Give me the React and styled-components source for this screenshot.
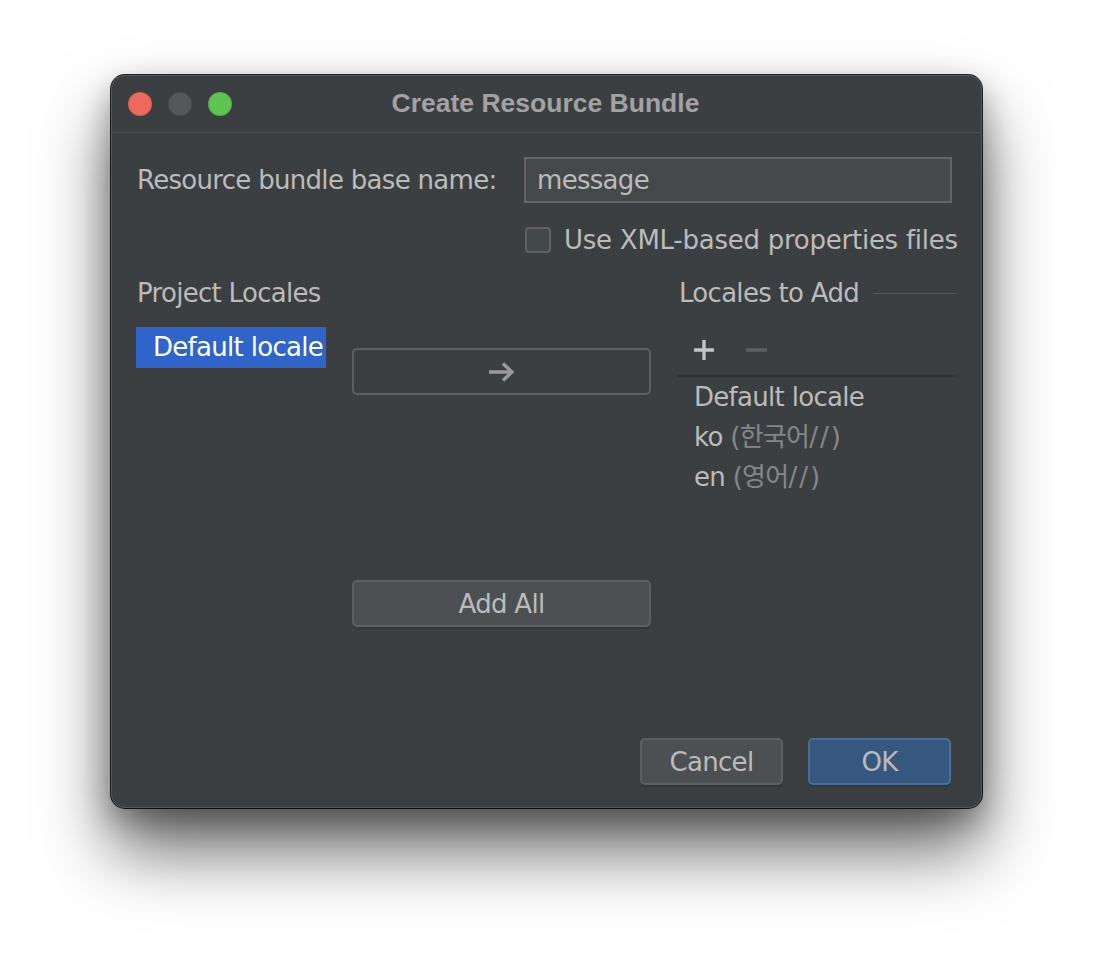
import React from "react";
import styled, { createGlobalStyle } from "styled-components";

const GlobalStyle = createGlobalStyle`
  html, body { margin: 0; padding: 0; background: #ffffff; }
  body { font-family: "DejaVu Sans", "Noto Sans CJK KR", sans-serif; }
`;

const Page = styled.div`
  width: 1094px;
  height: 956px;
  padding: 75px 0 0 111px;
  box-sizing: border-box;
`;

const Window = styled.div`
  width: 871px;
  height: 733px;
  background: #3c3f41;
  border-radius: 14px;
  box-shadow: inset 0 0 0 1px rgba(255, 255, 255, 0.13),
    0 0 0 1px rgba(0, 0, 0, 0.85), 0 42px 70px rgba(0, 0, 0, 0.6),
    0 12px 30px rgba(0, 0, 0, 0.3);
  display: flex;
  flex-direction: column;
  overflow: hidden;
`;

const TitleBar = styled.div`
  height: 57px;
  border-bottom: 1px solid #4c4f51;
  display: grid;
  grid-template-columns: 1fr auto 1fr;
  align-items: center;
  padding: 0 17px;
`;

const Lights = styled.div`
  display: flex;
  gap: 16px;
`;

const Light = styled.span`
  width: 24px;
  height: 24px;
  border-radius: 50%;
  background: ${(p) => p.$color};
  box-shadow: inset 0 0 0 1px rgba(0, 0, 0, 0.12);
`;

const Title = styled.div`
  font-family: "Liberation Sans", Arial, sans-serif;
  font-weight: 700;
  font-size: 26.5px;
  color: #a2a2a2;
  margin-left: -2px;
`;

const Content = styled.div`
  flex: 1;
  display: flex;
  flex-direction: column;
  padding: 24px 25px 23px 25px;
  font-size: 26px;
  letter-spacing: -0.7px;
  color: #bbbbbb;
`;

const FormGrid = styled.div`
  display: grid;
  grid-template-columns: 388px 1fr;
  grid-template-rows: 46px 26px;
  row-gap: 24px;
  align-items: center;
`;

const Label = styled.div`
  padding-left: 1px;
  line-height: 30px;
`;

const TextField = styled.div`
  height: 46px;
  margin-right: 6px;
  box-sizing: border-box;
  background: #45494a;
  border: 2px solid #646464;
  padding: 0 11px;
  display: flex;
  align-items: center;
`;

const CheckRow = styled.label`
  grid-column: 2;
  display: flex;
  align-items: center;
  gap: 13px;
  padding-left: 1px;
  letter-spacing: -0.25px;
  white-space: nowrap;
`;

const CheckBox = styled.span`
  width: 26px;
  height: 26px;
  flex: none;
  box-sizing: border-box;
  border: 2px solid #5f6163;
  background: #43494a;
  border-radius: 4px;
`;

const Main = styled.div`
  flex: 1;
  margin-top: 26px;
  display: grid;
  grid-template-columns: 190px 299px 279px;
  column-gap: 26px;
  align-items: start;
  & > :nth-child(3) { margin-left: 1px; }
`;

const Column = styled.div`
  display: flex;
  flex-direction: column;
`;

const Header = styled.div`
  height: 28px;
  line-height: 28px;
  padding-left: 1px;
  display: flex;
  align-items: center;
  gap: 15px;
  white-space: nowrap;
`;

const HeaderLine = styled.span`
  flex: 1;
  height: 1px;
  background: #56595b;
`;

const SelectedItem = styled.div`
  margin-top: 20px;
  height: 41px;
  line-height: 41px;
  padding-left: 17px;
  background: #2f65ca;
  color: #ffffff;
  white-space: nowrap;
`;

const Button = styled.button`
  font: inherit;
  letter-spacing: inherit;
  height: 47px;
  width: ${(p) => p.$width || "100%"};
  margin-top: ${(p) => p.$top || 0}px;
  box-sizing: border-box;
  border-radius: 5px;
  border: 2px solid ${(p) => (p.$primary ? "#4a6e92" : "#5e6060")};
  background: ${(p) =>
    p.$primary ? "#365880" : p.$ghost ? "transparent" : "#4c5052"};
  color: #bbbbbb;
  display: flex;
  align-items: center;
  justify-content: center;
  padding: 0;
  box-shadow: ${(p) => (p.$ghost ? "none" : "0 2px 0 rgba(0,0,0,0.12)")};
`;

const Toolbar = styled.div`
  margin-top: 25px;
  height: 36px;
  display: flex;
  align-items: center;
  gap: 31px;
  padding-left: 15px;
`;

const Separator = styled.div`
  margin-top: 7px;
  height: 2px;
  background: #2f3133;
`;

const LocaleRow = styled.div`
  height: 40px;
  line-height: 40px;
  padding-left: 16px;
  white-space: nowrap;
`;

const Muted = styled.span`
  color: #84878a;
`;

const Slashes = styled.span`
  letter-spacing: 2px;
`;

const Footer = styled.div`
  display: flex;
  justify-content: flex-end;
  gap: 25px;
  margin-right: 6px;
`;

const ArrowIcon = () => (
  <svg width="28" height="22" viewBox="0 0 28 22">
    <path
      d="M1 11 H24 M15 2.5 L24 11 L15 19.5"
      fill="none"
      stroke="#9a9a9a"
      strokeWidth="3.4"
    />
  </svg>
);

const PlusIcon = () => (
  <svg width="22" height="22" viewBox="0 0 22 22">
    <path d="M11 1 V21 M1 11 H21" stroke="#c4c4c4" strokeWidth="3.4" />
  </svg>
);

const MinusIcon = () => (
  <svg width="21" height="22" viewBox="0 0 21 22">
    <path d="M0 11 H21" stroke="#5e6062" strokeWidth="3.4" />
  </svg>
);

export default function App() {
  return (
    <Page>
      <GlobalStyle />
      <Window>
        <TitleBar>
          <Lights>
            <Light $color="#ee6a5f" />
            <Light $color="#55585a" />
            <Light $color="#5ec453" />
          </Lights>
          <Title>Create Resource Bundle</Title>
          <span />
        </TitleBar>
        <Content>
          <FormGrid>
            <Label>Resource bundle base name:</Label>
            <TextField>message</TextField>
            <CheckRow>
              <CheckBox />
              <span>Use XML-based properties files</span>
            </CheckRow>
          </FormGrid>
          <Main>
            <Column>
              <Header>Project Locales</Header>
              <SelectedItem>Default locale</SelectedItem>
            </Column>
            <Column>
              <Button $ghost $top={69}>
                <ArrowIcon />
              </Button>
              <Button $top={185}>Add All</Button>
            </Column>
            <Column>
              <Header>
                <span>Locales to Add</span>
                <HeaderLine />
              </Header>
              <Toolbar>
                <PlusIcon />
                <MinusIcon />
              </Toolbar>
              <Separator />
              <LocaleRow>Default locale</LocaleRow>
              <LocaleRow>
                ko <Muted>(한국어<Slashes>//</Slashes>)</Muted>
              </LocaleRow>
              <LocaleRow>
                en <Muted>(영어<Slashes>//</Slashes>)</Muted>
              </LocaleRow>
            </Column>
          </Main>
          <Footer>
            <Button $width="143px">Cancel</Button>
            <Button $width="143px" $primary>
              OK
            </Button>
          </Footer>
        </Content>
      </Window>
    </Page>
  );
}
